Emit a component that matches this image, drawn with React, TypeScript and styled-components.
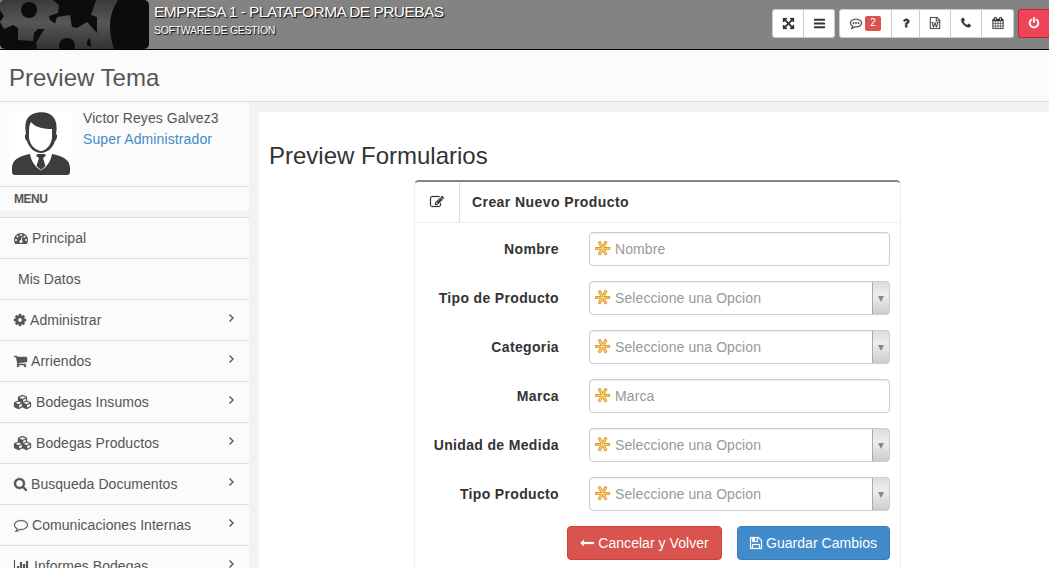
import React from 'react';
import styled, { createGlobalStyle, css } from 'styled-components';

const Global = createGlobalStyle`
  *, *::before, *::after { box-sizing: border-box; }
  html, body { margin: 0; height: 100%; overflow: hidden; }
  body {
    background: #f2f2f2;
    color: #333;
    font: 14px/20px "Liberation Sans", Arial, sans-serif;
  }
  #root { height: 100%; }
`;

/* ---------- icons ---------- */

const glyphs = {
  arrows: [1792, 'M1411 541l-355 355 355 355 144-144q29-31 70-14 39 17 39 59v448q0 26-19 45t-45 19h-448q-42 0-59-40-17-39 14-69l144-144-355-355-355 355 144 144q31 30 14 69-17 40-59 40h-448q-26 0-45-19t-19-45v-448q0-42 40-59 39-17 69 14l144 144 355-355-355-355-144 144q-19 19-45 19-12 0-24-5-40-17-40-59v-448q0-26 19-45t45-19h448q42 0 59 40 17 39-14 69l-144 144 355 355 355-355-144-144q-31-30-14-69 17-40 59-40h448q26 0 45 19t19 45v448q0 42-39 59-13 5-25 5-26 0-45-19z'],
  bars: [1792, 'M1664 1344v128q0 26-19 45t-45 19h-1408q-26 0-45-19t-19-45v-128q0-26 19-45t45-19h1408q26 0 45 19t19 45zm0-512v128q0 26-19 45t-45 19h-1408q-26 0-45-19t-19-45v-128q0-26 19-45t45-19h1408q26 0 45 19t19 45zm0-512v128q0 26-19 45t-45 19h-1408q-26 0-45-19t-19-45v-128q0-26 19-45t45-19h1408q26 0 45 19t19 45z'],
  comment: [1792, 'M896 384q-204 0-381.5 69.5t-282 187.5-104.5 255q0 112 71.5 213.5t201.5 175.5l87 50-27 96q-24 91-70 172 152-63 275-171l43-38 57 6q69 8 130 8 204 0 381.5-69.5t282-187.5 104.5-255-104.5-255-282-187.5-381.5-69.5zm896 512q0 174-120 321.5t-326 233-450 85.5q-70 0-145-8-198 175-460 242-49 14-114 22h-5q-15 0-27-10.5t-16-27.5v-1q-3-4-.5-12t2-10 4.5-9.5l6-9 7-8.5 8-9q7-8 31-34.5t34.5-38 31-39.5 32.5-51 27-59 26-76q-157-89-247.5-220t-90.5-281q0-174 120-321.5t326-233 450-85.5 450 85.5 326 233 120 321.5z'],
  commenting: [1792, 'M640 896a128 128 0 1 1-256 0 128 128 0 0 1 256 0zm384 0a128 128 0 1 1-256 0 128 128 0 0 1 256 0zm384 0a128 128 0 1 1-256 0 128 128 0 0 1 256 0zM896 384q-204 0-381.5 69.5t-282 187.5-104.5 255q0 112 71.5 213.5t201.5 175.5l87 50-27 96q-24 91-70 172 152-63 275-171l43-38 57 6q69 8 130 8 204 0 381.5-69.5t282-187.5 104.5-255-104.5-255-282-187.5-381.5-69.5zm896 512q0 174-120 321.5t-326 233-450 85.5q-70 0-145-8-198 175-460 242-49 14-114 22h-5q-15 0-27-10.5t-16-27.5v-1q-3-4-.5-12t2-10 4.5-9.5l6-9 7-8.5 8-9q7-8 31-34.5t34.5-38 31-39.5 32.5-51 27-59 26-76q-157-89-247.5-220t-90.5-281q0-174 120-321.5t326-233 450-85.5 450 85.5 326 233 120 321.5z'],
  question: [1792, 'M1088 1256v240q0 16-12 28t-28 12h-240q-16 0-28-12t-12-28v-240q0-16 12-28t28-12h240q16 0 28 12t12 28zm316-600q0 54-15.5 101t-35 76.5-55 59.5-57.5 43.5-61 35.5q-41 23-68.5 65t-27.5 67q0 17-12 32.5t-28 15.5h-240q-15 0-25.5-18.5t-10.5-37.5v-45q0-83 65-156.5t143-108.5q59-27 84-56t25-76q0-42-46.5-74t-107.5-32q-65 0-108 29-35 25-107 115-13 16-31 16-12 0-25-8l-164-125q-13-10-15.5-25t5.5-28q160-266 464-266 80 0 161 31t146 83 106 127.5 41 158.5z'],
  word: [1792, 'M1596 380q28 28 48 76t20 88v1152q0 40-28 68t-68 28h-1344q-40 0-68-28t-28-68v-1600q0-40 28-68t68-28h896q40 0 88 20t76 48zm-444-244v376h376q-10-29-22-41l-313-313q-12-12-41-22zm384 1528v-1024h-416q-40 0-68-28t-28-68v-416h-768v1536h1280zm-1175-896v107h70l164 661h159l128-485q7-20 10-46 2-16 2-24h4l3 24q1 3 3.5 20t5.5 26l128 485h159l164-661h70v-107h-300v107h90l-99 438q-5 20-7 46l-2 21h-4l-3-21q-1-5-4-21t-5-25l-144-545h-114l-144 545q-2 9-4.5 24.5t-3.5 21.5l-4 21h-4l-2-21q-2-26-7-46l-99-438h90v-107h-300z'],
  phone: [1792, 'M1600 1240q0 27-10 70.5t-21 68.5q-21 50-122 106-94 51-186 51-27 0-52.5-3.5t-57.5-12.5-47.5-14.5-55.5-20.5-49-18q-98-35-175-83-128-79-264.5-215.5t-215.5-264.5q-48-77-83-175-3-9-18-49t-20.5-55.5-14.5-47.5-12.5-57.5-3.5-52.5q0-92 51-186 56-101 106-122 25-11 68.5-21t70.5-10q14 0 21 3 18 6 53 76 11 19 30 54t35 63.5 31 53.5q3 4 17.5 25t21.5 35.5 7 28.5q0 20-28.5 50t-62 55-62 53-28.5 46q0 9 5 22.5t8.5 20.5 14 24 11.5 19q76 137 174 235t235 174q2 1 19 11.5t24 14 20.5 8.5 22.5 5q18 0 46-28.5t53-62 55-62 50-28.5q14 0 28.5 7t35.5 21.5 25 17.5q25 15 53.5 31t63.5 35 54 30q70 35 76 53 3 7 3 21z'],
  calendar: [1792, 'M192 1664h288v-288h-288v288zm352 0h320v-288h-320v288zm-352-352h288v-320h-288v320zm352 0h320v-320h-320v320zm-352-384h288v-288h-288v288zm736 736h320v-288h-320v288zm-384-736h320v-288h-320v288zm768 736h288v-288h-288v288zm-384-352h320v-320h-320v320zm-352-864v-288q0-13-9.5-22.5t-22.5-9.5h-64q-13 0-22.5 9.5t-9.5 22.5v288q0 13 9.5 22.5t22.5 9.5h64q13 0 22.5-9.5t9.5-22.5zm736 864h288v-320h-288v320zm-384-384h320v-288h-320v288zm384 0h288v-288h-288v288zm32-480v-288q0-13-9.5-22.5t-22.5-9.5h-64q-13 0-22.5 9.5t-9.5 22.5v288q0 13 9.5 22.5t22.5 9.5h64q13 0 22.5-9.5t9.5-22.5zm384-64v1280q0 52-38 90t-90 38h-1408q-52 0-90-38t-38-90v-1280q0-52 38-90t90-38h128v-96q0-66 47-113t113-47h64q66 0 113 47t47 113v96h384v-96q0-66 47-113t113-47h64q66 0 113 47t47 113v96h128q52 0 90 38t38 90z'],
  power: [1792, 'M1664 896q0 156-61 298t-164 245-245 164-298 61-298-61-245-164-164-245-61-298q0-182 80.5-343t226.5-270q43-32 95.5-25t83.5 50q32 42 24.5 94.5t-49.5 84.5q-98 74-151.5 181t-53.5 228q0 104 40.5 198.5t109.5 163.5 163.5 109.5 198.5 40.5 198.5-40.5 163.5-109.5 109.5-163.5 40.5-198.5q0-121-53.5-228t-151.5-181q-42-32-49.5-84.5t24.5-94.5q31-43 84-50t95 25q146 109 226.5 270t80.5 343zm-640-768v640q0 52-38 90t-90 38-90-38-38-90v-640q0-52 38-90t90-38 90 38 38 90z'],
  dashboard: [1792, 'M384 1152q0-53-37.5-90.5t-90.5-37.5-90.5 37.5-37.5 90.5 37.5 90.5 90.5 37.5 90.5-37.5 37.5-90.5zm192-448q0-53-37.5-90.5t-90.5-37.5-90.5 37.5-37.5 90.5 37.5 90.5 90.5 37.5 90.5-37.5 37.5-90.5zm428 481l101-382q6-26-7.5-48.5t-38.5-29.5-48 6.5-30 39.5l-101 382q-60 5-107 43.5t-63 98.5q-20 77 20 146t117 89 146-20 89-117q16-60-6-117t-72-91zm660-33q0-53-37.5-90.5t-90.5-37.5-90.5 37.5-37.5 90.5 37.5 90.5 90.5 37.5 90.5-37.5 37.5-90.5zm-640-640q0-53-37.5-90.5t-90.5-37.5-90.5 37.5-37.5 90.5 37.5 90.5 90.5 37.5 90.5-37.5 37.5-90.5zm448 192q0-53-37.5-90.5t-90.5-37.5-90.5 37.5-37.5 90.5 37.5 90.5 90.5 37.5 90.5-37.5 37.5-90.5zm320 448q0 261-141 483-19 29-54 29h-1402q-35 0-54-29-141-221-141-483 0-182 71-348t191-286 286-191 348-71 348 71 286 191 191 286 71 348z'],
  cog: [1792, 'M1152 896q0-106-75-181t-181-75-181 75-75 181 75 181 181 75 181-75 75-181zm512-109v222q0 12-8 23t-20 13l-185 28q-19 54-39 91 35 50 107 138 10 12 10 25t-9 23q-27 37-99 108t-94 71q-12 0-26-9l-138-108q-44 23-91 38-16 136-29 186-7 28-36 28h-222q-14 0-24.5-8.5t-11.5-21.5l-28-184q-49-16-90-37l-141 107q-10 9-25 9-14 0-25-11-126-114-165-168-7-10-7-23 0-12 8-23 15-21 51-66.5t54-70.5q-27-50-41-99l-183-27q-13-2-21-12.5t-8-23.5v-222q0-12 8-23t19-13l186-28q14-46 39-92-40-57-107-138-10-12-10-24 0-10 9-23 26-36 98.5-107.5t94.5-71.5q13 0 26 10l138 107q44-23 91-38 16-136 29-186 7-28 36-28h222q14 0 24.5 8.5t11.5 21.5l28 184q49 16 90 37l142-107q9-9 24-9 13 0 25 10 129 119 165 170 7 8 7 22 0 12-8 23-15 21-51 66.5t-54 70.5q26 50 41 98l183 28q13 2 21 12.5t8 23.5z'],
  cart: [1792, 'M704 1536q0 52-38 90t-90 38-90-38-38-90 38-90 90-38 90 38 38 90zm896 0q0 52-38 90t-90 38-90-38-38-90 38-90 90-38 90 38 38 90zm128-1088v512q0 24-16.5 42.5t-40.5 21.5l-1044 122q13 60 13 70 0 16-24 64h920q26 0 45 19t19 45-19 45-45 19h-1024q-26 0-45-19t-19-45q0-11 8-31.5t16-36 21.5-40 15.5-29.5l-177-823h-204q-26 0-45-19t-19-45 19-45 45-19h256q16 0 28.5 6.5t19.5 15.5 13 24.5 8 26 5.5 29.5 4.5 26h1201q26 0 45 19t19 45z'],
  cubes: [2304, 'M640 1632l384-192v-314l-384 164v342zm-64-454l404-173-404-173-404 173zm1088 454l384-192v-314l-384 164v342zm-64-454l404-173-404-173-404 173zm-448-293l384-165v-266l-384 164v267zm-64-379l441-189-441-189-441 189zm1088 518v416q0 36-19 67t-52 47l-448 224q-25 14-57 14t-57-14l-448-224q-4-2-7-4-2 2-7 4l-448 224q-25 14-57 14t-57-14l-448-224q-33-16-52-47t-19-67v-416q0-38 21.5-70t56.5-48l434-186v-400q0-38 21.5-70t56.5-48l448-192q23-10 50-10t50 10l448 192q35 16 56.5 48t21.5 70v400l434 186q36 16 57 48t21 70z'],
  search: [1792, 'M1216 832q0-185-131.5-316.5t-316.5-131.5-316.5 131.5-131.5 316.5 131.5 316.5 316.5 131.5 316.5-131.5 131.5-316.5zm512 832q0 52-38 90t-90 38q-54 0-90-38l-343-342q-179 124-399 124-143 0-273.5-55.5t-225-150-150-225-55.5-273.5 55.5-273.5 150-225 225-150 273.5-55.5 273.5 55.5 225 150 150 225 55.5 273.5q0 220-124 399l343 343q37 37 37 90z'],
  chart: [2048, 'M640 896v512h-256v-512h256zm384-512v1024h-256v-1024h256zm1024 1152v128h-2048v-1536h128v1408h1920zm-640-896v768h-256v-768h256zm384-384v1152h-256v-1152h256z'],
  edit: [1792, 'M888 1184l116-116-152-152-116 116v56h96v96h56zm440-720q-16-16-33 1l-350 350q-17 17-1 33t33-1l350-350q17-17 1-33zm80 594v190q0 119-84.5 203.5t-203.5 84.5h-832q-119 0-203.5-84.5t-84.5-203.5v-832q0-119 84.5-203.5t203.5-84.5h832q63 0 117 25 15 7 18 23 3 17-9 29l-49 49q-14 14-32 8-23-6-45-6h-832q-66 0-113 47t-47 113v832q0 66 47 113t113 47h832q66 0 113-47t47-113v-126q0-13 9-22l64-64q15-15 35-7t20 29zm-96-738l288 288-672 672h-288v-288zm444 132l-92 92-288-288 92-92q28-28 68-28t68 28l152 152q28 28 28 68t-28 68z'],
  back: [1792, 'M1792 800v192q0 14-9 23t-23 9h-1248v224q0 21-19 29t-35-5l-384-350q-10-10-10-23 0-14 10-24l384-354q16-14 35-6 19 9 19 29v224h1248q14 0 23 9t9 23z'],
  save: [1792, 'M512 1536h768v-384h-768v384zm896 0h128v-896q0-14-10-38.5t-20-34.5l-281-281q-10-10-34-20t-39-10v416q0 40-28 68t-68 28h-576q-40 0-68-28t-28-68v-416h-128v1280h128v-416q0-40 28-68t68-28h832q40 0 68 28t28 68v416zm-384-928v-320q0-13-9.5-22.5t-22.5-9.5h-192q-13 0-22.5 9.5t-9.5 22.5v320q0 13 9.5 22.5t22.5 9.5h192q13 0 22.5-9.5t9.5-22.5zm640 32v928q0 40-28 68t-68 28h-1344q-40 0-68-28t-28-68v-1344q0-40 28-68t68-28h928q40 0 88 20t76 48l280 280q28 28 48 76t20 88z'],
} as const;

type GlyphName = keyof typeof glyphs;

const Svg = styled.svg`
  display: block;
  flex: none;
  fill: currentColor;
  overflow: visible;
`;

/* `trim` removes the side bearing of glyphs narrower than their em box,
   `bold` thickens hairline glyphs at small sizes */
function Icon({ name, size = 14, trim = 0, bold = 0 }: { name: GlyphName; size?: number; trim?: number; bold?: number }) {
  const [w, d] = glyphs[name];
  const vw = w - trim * 2;
  return (
    <Svg width={(size * vw) / 1792} height={size} viewBox={`${trim} 0 ${vw} 1792`}>
      <path d={d} stroke="currentColor" strokeWidth={bold} />
    </Svg>
  );
}

/* ---------- header ---------- */

const Page = styled.div`
  display: flex;
  flex-direction: column;
  height: 568px;
  overflow: hidden;
`;

const Header = styled.header`
  display: flex;
  flex: none;
  height: 50px;
  background: #838383;
  border-bottom: 1px solid #000;
`;

const Logo = styled.svg`
  flex: none;
  width: 149px;
  height: 49px;
`;

const Brand = styled.div`
  flex: 1;
  padding: 2px 0 0 5px;
  color: #fff;
  text-shadow: 1px 1px 1px #000;
`;

const Company = styled.div`
  font-size: 15.5px;
  line-height: 20px;
  letter-spacing: -0.55px;
  white-space: nowrap;
`;

const Tagline = styled.div`
  font-size: 10.5px;
  line-height: 16px;
  letter-spacing: -0.3px;
`;

const Toolbar = styled.div`
  display: flex;
  flex: none;
  gap: 4px;
  padding-top: 9px;
  width: 277px;
`;

const Group = styled.div`
  display: flex;
  flex: none;
  height: 29px;
`;

const ToolButton = styled.button<{ $w: number; $danger?: boolean }>`
  display: flex;
  align-items: center;
  justify-content: center;
  gap: 3px;
  width: ${(p) => p.$w}px;
  padding: 0 0 1px;
  margin: 0;
  font: 12px/18px "Liberation Sans", Arial, sans-serif;
  color: #333;
  background: #fff;
  border: 1px solid #ccc;
  & + & { border-left: 0; }
  &:first-child { border-radius: 3px 0 0 3px; }
  &:last-child { border-radius: 0 3px 3px 0; }
  &:only-child { border-radius: 3px; }
  ${(p) => p.$danger && css`
    color: #fff;
    background: #ef4559;
    border-color: #c81e38;
  `}
`;

const Badge = styled.span`
  width: 16px;
  height: 15px;
  border-radius: 2px;
  background: #d9534f;
  color: #fff;
  font-size: 10px;
  line-height: 14px;
  text-align: center;
`;

const TitleBar = styled.div`
  flex: none;
  height: 52px;
  padding: 11px 9px 0;
  background: #fbfbfb;
  border-bottom: 1px solid #ddd;
`;

const PageTitle = styled.h1`
  margin: 0;
  font-size: 24px;
  font-weight: 400;
  line-height: 33px;
  color: #555;
`;

/* ---------- sidebar ---------- */

const Body = styled.div`
  display: flex;
  flex: 1;
  min-height: 0;
`;

const Sidebar = styled.aside`
  flex: none;
  width: 249px;
  overflow: hidden;
  color: #555;
`;

const User = styled.div`
  display: flex;
  height: 84px;
  padding: 10px 9px 0;
  gap: 10px;
  background: #fbfbfb;
`;

const Avatar = styled.svg`
  flex: none;
  width: 64px;
  height: 64px;
  background: #fff;
`;

const UserText = styled.div`
  line-height: 21px;
  margin-top: -4px;
  letter-spacing: 0.06px;
`;

const Role = styled.a`
  color: #428bca;
  letter-spacing: 0.12px;
`;

const MenuHeading = styled.div`
  height: 25px;
  padding: 2px 14px 0;
  border-top: 1px solid #ddd;
  background: #fbfbfb;
  font-size: 12px;
  font-weight: 700;
  line-height: 20px;
  letter-spacing: -0.5px;
`;

const Menu = styled.ul`
  list-style: none;
  margin: 6px 0 0;
  padding: 0;
`;

const MenuItem = styled.li`
  display: flex;
  align-items: center;
  gap: 4px;
  height: 41px;
  padding: 0 14px;
  border-top: 1px solid #ddd;
  background: #fbfbfb;
  letter-spacing: 0.05px;
  white-space: nowrap;
`;

const Chevron = styled.svg`
  width: 8px;
  height: 10px;
  margin: -4px 0 0 auto;
  fill: none;
  stroke: #555;
  stroke-width: 1.4;
`;

/* ---------- content ---------- */

const Content = styled.main`
  flex: 1;
  margin: 10px 0 0 10px;
  padding: 27px 10px 0;
  background: #fff;
`;

const Heading = styled.h2`
  margin: 0;
  font-size: 24px;
  font-weight: 400;
  line-height: 34px;
`;

const Panel = styled.section`
  width: 487px;
  height: 440px;
  margin: 7px 0 0 145px;
  border: 1px solid #eee;
  border-top: 2px solid #838383;
  border-radius: 5px 5px 0 0;
`;

const PanelHeader = styled.header`
  display: flex;
  height: 41px;
  border-bottom: 1px solid #eee;
`;

const PanelIcon = styled.div`
  display: flex;
  align-items: center;
  justify-content: center;
  width: 45px;
  border-right: 1px solid #ddd;
`;

const PanelTitle = styled.h5`
  margin: 0;
  padding-left: 12px;
  font-size: 14px;
  line-height: 40px;
  letter-spacing: 0.42px;
`;

const Form = styled.form`
  display: flex;
  flex-direction: column;
  gap: 15px;
  padding: 9px 10px 0 0;
`;

const Row = styled.div`
  display: flex;
  height: 34px;
  gap: 30px;
`;

const Label = styled.label`
  width: 144px;
  font-weight: 700;
  line-height: 34px;
  text-align: right;
  white-space: nowrap;
  letter-spacing: 0.34px;
`;

const Field = styled.div`
  display: flex;
  align-items: center;
  width: 301px;
  padding-left: 5px;
  overflow: hidden;
  border: 1px solid #ccc;
  border-radius: 4px;
  color: #999;
  box-shadow: inset 0 1px 1px rgba(0, 0, 0, 0.075);
`;

const Placeholder = styled.span`
  flex: 1;
  margin-left: 4px;
  letter-spacing: 0.1px;
`;

const Dropdown = styled.span`
  display: flex;
  align-items: center;
  justify-content: center;
  width: 18px;
  height: 34px;
  margin-right: -1px;
  padding-top: 1px;
  border: 1px solid #aaa;
  border-radius: 0 4px 4px 0;
  background: linear-gradient(#ddd, #eee 40%, #ccc);
  &::after {
    content: '';
    border: 3.5px solid transparent;
    border-top: 6px solid #888;
    border-bottom: 0;
  }
`;

const Actions = styled.div`
  display: flex;
  justify-content: flex-end;
  gap: 15px;
`;

const Action = styled.button<{ $tone: 'danger' | 'primary' }>`
  display: flex;
  align-items: center;
  justify-content: center;
  gap: 4px;
  width: ${(p) => (p.$tone === 'danger' ? 155 : 153)}px;
  height: 34px;
  padding: 0;
  font: 14px/20px "Liberation Sans", Arial, sans-serif;
  letter-spacing: 0.04px;
  color: #fff;
  border: 1px solid ${(p) => (p.$tone === 'danger' ? '#d43f3a' : '#357ebd')};
  border-radius: 4px;
  background: ${(p) => (p.$tone === 'danger' ? '#d9534f' : '#428bca')};
  white-space: nowrap;
`;

function Required() {
  const arms = 'M1.600 8.600h12M4.700 2.900l5.800 10.600M10.500 2.900l-5.800 10.600';
  return (
    <Svg width="16" height="18" viewBox="0 0 16 18">
      <g fill="none" strokeLinecap="square">
        <path d={arms} stroke="#c98d3e" strokeWidth="3" />
        <path d={arms} stroke="#ffc95c" strokeWidth="1.700" />
      </g>
    </Svg>
  );
}

function GearsLogo() {
  return (
    <Logo viewBox="0 0 149 49">
      <defs>
        <linearGradient id="metal" gradientUnits="userSpaceOnUse" x1="0" y1="0" x2="0" y2="49">
          <stop offset="0" stopColor="#3a3a3a" />
          <stop offset="0.45" stopColor="#575757" />
          <stop offset="1" stopColor="#333" />
        </linearGradient>
        <clipPath id="plate"><rect width="149" height="49" rx="5" /></clipPath>
      </defs>
      <g clipPath="url(#plate)">
        <rect width="149" height="49" fill="#0c0c0c" />
        <path fill="url(#metal)" d="M0 0H53L59 5L58 13L49 16L50 20L57 25L52 31L42 29L38 29L34 33L33 41L18 40L18 28L13 25L4 29L0 22L4 16L0 10Z" />
        <path fill="url(#metal)" d="M37 49L36 43L43 31L48 27L54 27L57 17L70 15L72 27L77 28L87 22L97 33L91 49Z" />
        <path fill="url(#metal)" d="M96 0H118Q110 12 110 25T114 49H90L91 41L97 33L97 17L91 15Z" />
        <circle cx="29" cy="10" r="8" fill="#0b0b0b" />
        <circle cx="67" cy="46" r="8" fill="#0b0b0b" />
        <path d="M90 38q-4 3-3 7l4 2z" fill="#0b0b0b" />
      </g>
    </Logo>
  );
}

function UserAvatar() {
  return (
    <Avatar viewBox="0 0 64 64">
      <path fill="#3d3d3d" d="M17 22c-2-11 0-20 12-21.500 13-2 21 6 18 21.500 2 1 1 5-1 7-2 7-8 12-14 12s-12-5-14-12c-2-1-3-6-1-7z" />
      <path fill="#fff" d="M20 22c0-5 0-9 2-12 5 6 13 7 21 7v9c-1 8-7 13-11 13s-11-5-12-13z" />
      <path fill="#3d3d3d" d="M21 42c-10 2-18 5-18 14v4c0 2 1 3 3 3h52c2 0 3-1 3-3v-4c0-9-8-12-18-14-1 7-5 13-11 16.500-6-3.500-10-9.500-11-16.500z" />
      <path fill="#3d3d3d" d="M29 42h6c3 0 1.500 3-1 4l2.500 8-4.500 4-4.500-4 2.500-8c-2.500-1-4-4-1-4z" />
    </Avatar>
  );
}

const menu: { icon?: GlyphName; label: string; trim?: number; bold?: number; arrow?: boolean }[] = [
  { icon: 'dashboard', label: 'Principal' },
  { label: 'Mis Datos' },
  { icon: 'cog', label: 'Administrar', trim: 128, bold: 40, arrow: true },
  { icon: 'cart', label: 'Arriendos', trim: 64, bold: 60, arrow: true },
  { icon: 'cubes', label: 'Bodegas Insumos', bold: 30, arrow: true },
  { icon: 'cubes', label: 'Bodegas Productos', bold: 30, arrow: true },
  { icon: 'search', label: 'Busqueda Documentos', trim: 64, bold: 40, arrow: true },
  { icon: 'comment', label: 'Comunicaciones Internas', bold: 20, arrow: true },
  { icon: 'chart', label: 'Informes Bodegas', bold: 20, arrow: true },
];

const fields = [
  { label: 'Nombre', placeholder: 'Nombre' },
  { label: 'Tipo de Producto', placeholder: 'Seleccione una Opcion', select: true },
  { label: 'Categoria', placeholder: 'Seleccione una Opcion', select: true },
  { label: 'Marca', placeholder: 'Marca' },
  { label: 'Unidad de Medida', placeholder: 'Seleccione una Opcion', select: true },
  { label: 'Tipo Producto', placeholder: 'Seleccione una Opcion', select: true },
];

export default function App() {
  return (
    <Page>
      <Global />
      <Header>
        <GearsLogo />
        <Brand>
          <Company>EMPRESA 1 - PLATAFORMA DE PRUEBAS</Company>
          <Tagline>SOFTWARE DE GESTION</Tagline>
        </Brand>
        <Toolbar>
          <Group>
            <ToolButton $w={32}><Icon name="arrows" size={13} bold={30} /></ToolButton>
            <ToolButton $w={31}><Icon name="bars" size={13} /></ToolButton>
          </Group>
          <Group>
            <ToolButton $w={53}><Icon name="commenting" size={12} bold={30} /><Badge>2</Badge></ToolButton>
            <ToolButton $w={28}><Icon name="question" size={12} bold={60} /></ToolButton>
            <ToolButton $w={31}><Icon name="word" size={12} bold={20} /></ToolButton>
            <ToolButton $w={31}><Icon name="phone" size={12} bold={60} /></ToolButton>
            <ToolButton $w={32}><Icon name="calendar" size={12} bold={20} /></ToolButton>
          </Group>
          <Group>
            <ToolButton $w={32} $danger><Icon name="power" size={12} bold={30} /></ToolButton>
          </Group>
        </Toolbar>
      </Header>
      <TitleBar><PageTitle>Preview Tema</PageTitle></TitleBar>
      <Body>
        <Sidebar>
          <User>
            <UserAvatar />
            <UserText>
              <div>Victor Reyes Galvez3</div>
              <Role>Super Administrador</Role>
            </UserText>
          </User>
          <MenuHeading>MENU</MenuHeading>
          <Menu>
            {menu.map((m) => (
              <MenuItem key={m.label}>
                {m.icon ? <Icon name={m.icon} trim={m.trim} bold={m.bold} /> : <span />}
                <span>{m.label}</span>
                {m.arrow && <Chevron viewBox="0 0 8 10"><path d="M2.500 1.500l3.500 3.500-3.500 3.500" /></Chevron>}
              </MenuItem>
            ))}
          </Menu>
        </Sidebar>
        <Content>
          <Heading>Preview Formularios</Heading>
          <Panel>
            <PanelHeader>
              <PanelIcon><Icon name="edit" bold={30} /></PanelIcon>
              <PanelTitle>Crear Nuevo Producto</PanelTitle>
            </PanelHeader>
            <Form>
              {fields.map((f) => (
                <Row key={f.label}>
                  <Label>{f.label}</Label>
                  <Field>
                    <Required />
                    <Placeholder>{f.placeholder}</Placeholder>
                    {f.select && <Dropdown />}
                  </Field>
                </Row>
              ))}
              <Actions>
                <Action type="button" $tone="danger"><Icon name="back" bold={30} />Cancelar y Volver</Action>
                <Action type="button" $tone="primary"><Icon name="save" trim={128} bold={30} />Guardar Cambios</Action>
              </Actions>
            </Form>
          </Panel>
        </Content>
      </Body>
    </Page>
  );
}
